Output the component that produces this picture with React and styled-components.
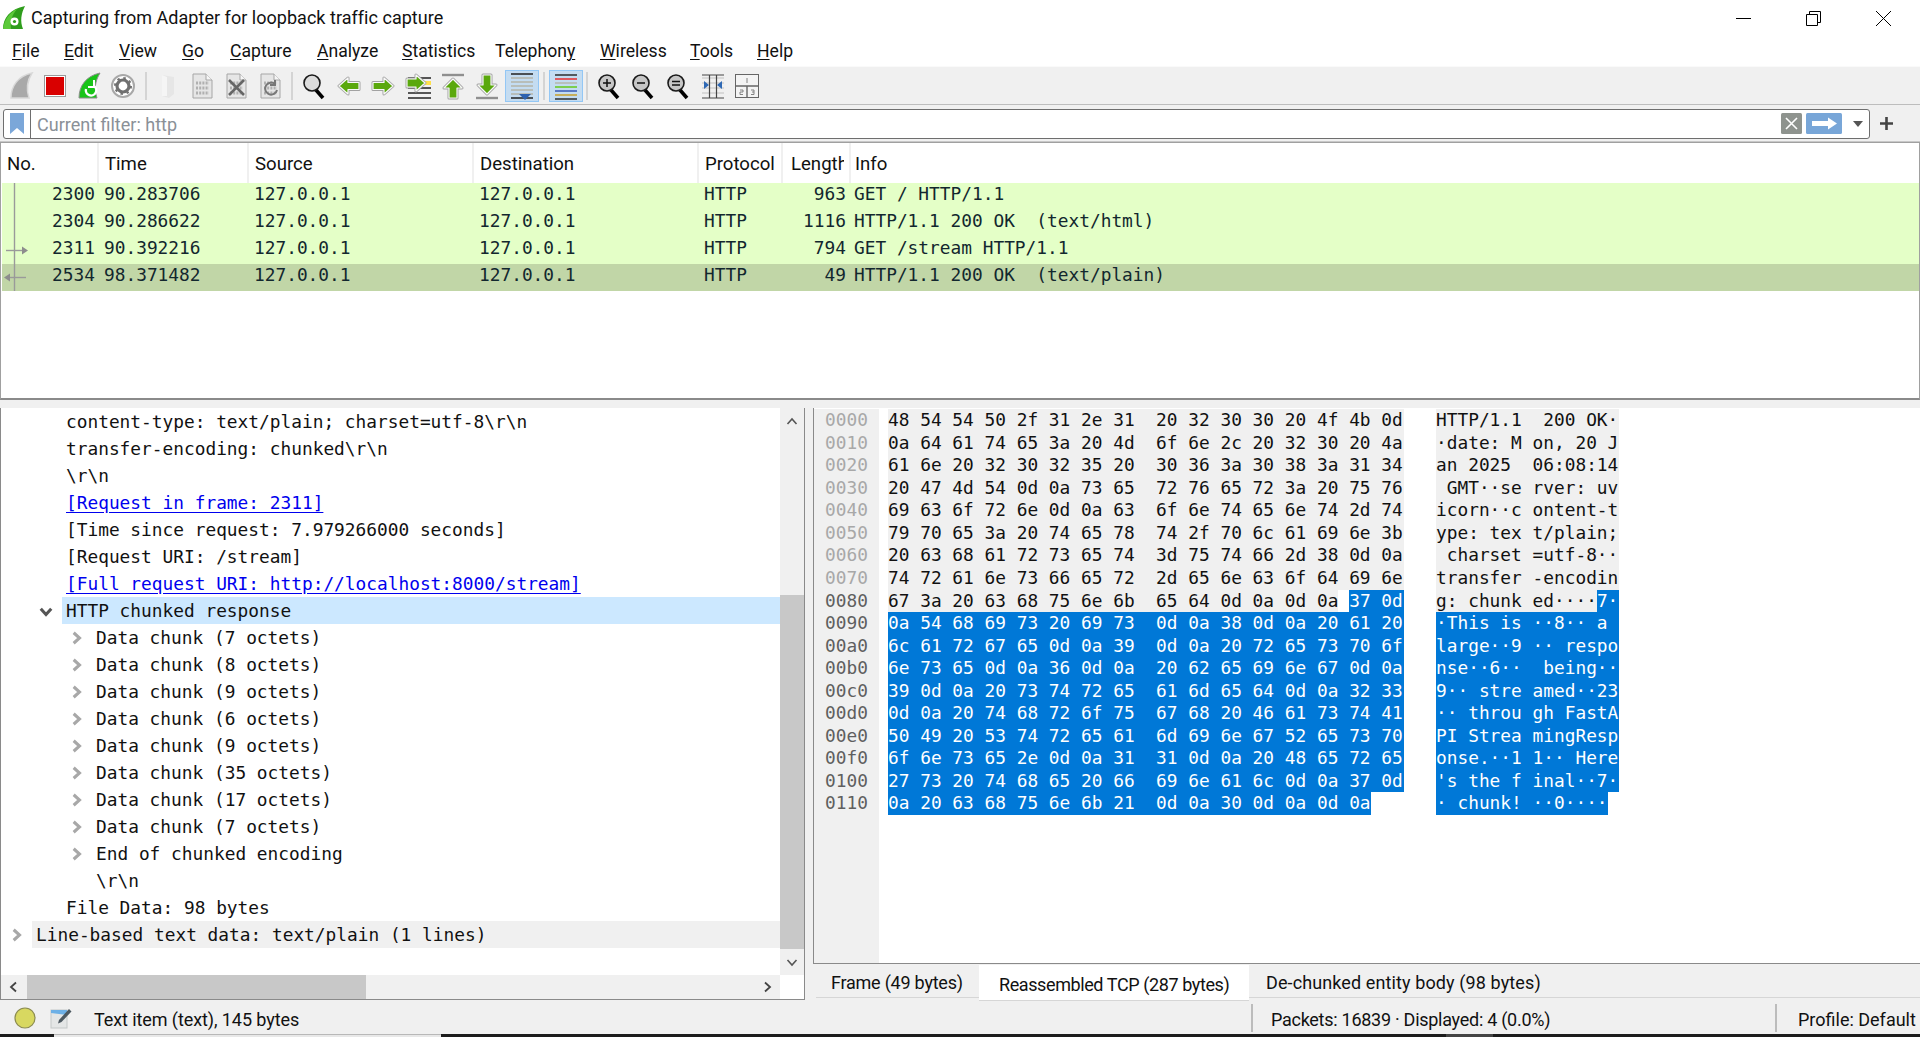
import React from "react";
import styled, { createGlobalStyle } from "styled-components";

const Global = createGlobalStyle`
  html, body { margin: 0; padding: 0; background: #fff; }
  body { font-family: Roboto, "Open Sans", sans-serif; color: #000; }
  * { box-sizing: border-box; }
`;

const UI = `Roboto, "Open Sans", "Liberation Sans", sans-serif`;
const MONO = `"DejaVu Sans Mono", "Liberation Mono", monospace`;

const Win = styled.div`
  width: 1920px; height: 1037px; overflow: hidden;
  display: flex; flex-direction: column; background: #f0f0f0;
  font-family: ${UI};
`;
const TitleBar = styled.header`
  height: 36px; background: #fff; display: flex; align-items: center;
  padding-left: 3px; position: relative;
`;
const TitleText = styled.div`
  font-size: 18px; margin: -2px 0 0 5px; color: #111; letter-spacing: 0.03px; white-space: nowrap;
`;
const WinButtons = styled.div`
  margin-left: auto; display: flex; align-items: center; padding-right: 29px; gap: 55px;
`;
const MenuBar = styled.nav`
  height: 30px; background: #fff; display: flex; align-items: center; padding: 0 0 1px 12px;
`;
const MenuItem = styled.span`
  font-size: 17.6px; color: #111; white-space: nowrap; flex: none; width: ${p => p.$w}px;
  u { text-underline-offset: 2px; text-decoration-thickness: 1px; }
`;
const Toolbar = styled.div`
  height: 39px; background: #f0f0f0; border-top: 1px solid #fafafa; border-bottom: 1px solid #bdbdbd;
  display: flex; align-items: center; padding: 1px 0 0 4px;
`;
const ToolBtn = styled.div`
  width: ${p => p.$w || 34}px; height: 32px; display: flex; align-items: center; justify-content: center; flex: none;
  background: ${p => (p.$on ? "#c4dcf1" : "transparent")};
  border: ${p => (p.$on ? "1px solid #93c7f5" : "none")};
`;
const ToolSep = styled.div`
  width: ${p => p.$w || 10}px; flex: none; display: flex; justify-content: center;
  &::before { content: ""; width: 2px; height: 28px; background: #d4d4d4; }
`;
const FilterBar = styled.div`
  height: 37px; background: #f0f0f0; border-bottom: 1px solid #c8c8c8; display: flex; align-items: center;
  padding: 1px 0 0 3px;
`;
const FilterBox = styled.div`
  width: 1867px; height: 30px; background: #fff; border: 1px solid #6e6e6e; border-radius: 3px;
  display: flex; align-items: center;
`;
const BookmarkCell = styled.div`
  width: 27px; height: 100%; border-right: 1px solid #6e6e6e; display: flex; align-items: center; justify-content: center;
`;
const FilterText = styled.div`
  font-size: 18px; color: #8a9097; padding: 2px 0 0 6px; flex: 1;
`;
const ApplyGap = styled.span`
  width: 4px; flex: none;
`;
const CaretCell = styled.div`
  width: 27px; flex: none; display: flex; justify-content: center; padding-left: 5px;
`;
const FilterPlus = styled.div`
  width: 32px; display: flex; justify-content: center;
`;
const PacketList = styled.section`
  height: 258px; background: #fff; border: 1px solid #a0a0a0; border-bottom: 2px solid #8a8a8a;
  display: flex; flex-direction: column; position: relative;
`;
const HeaderRow = styled.div`
  height: 40px; display: flex; background: #fff; flex: none;
`;
const HeaderCell = styled.div`
  width: ${p => p.$w}px; flex: ${p => (p.$w ? "none" : 1)}; font-size: 18.6px; padding-left: ${p => p.$pad ?? 6}px; padding-top: 1px;
  line-height: 40px; border-right: ${p => (p.$last ? "none" : "2px solid #f0f0f0")}; overflow: hidden; white-space: nowrap; color: #111;
`;
const HeaderLabel = styled.span`
  display: block; overflow: hidden; max-width: ${p => p.$clip || 400}px;
`;
const PacketRows = styled.div`
  position: relative; margin-left: 1px;
`;
const PacketRow = styled.div`
  height: 27px; display: flex; background: ${p => (p.$sel ? "#c1d6a7" : "#e4ffc7")};
  font-family: ${MONO}; font-size: 17.82px; line-height: 22px; color: #12272e; white-space: pre;
`;
const PacketCell = styled.div`
  width: ${p => p.$w}px; flex: ${p => (p.$w ? "none" : 1)}; text-align: ${p => p.$align || "left"};
  padding: 0 ${p => p.$pr ?? 0}px 0 ${p => p.$pl ?? 0}px;
`;
const RelationOverlay = styled.svg`
  position: absolute; left: 0; top: 0; pointer-events: none;
`;
const Gap = styled.div`
  height: 8px; flex: none; background: #f0f0f0;
`;
const Panes = styled.div`
  height: 592px; display: flex; flex: none;
`;
const TreePane = styled.section`
  width: 805px; flex: none; display: flex; flex-direction: column; background: #fff;
  border-left: 1px solid #8a8a8a; border-right: 1px solid #8a8a8a; border-bottom: 1px solid #8a8a8a;
`;
const TreeBody = styled.div`
  flex: 1; display: flex; min-height: 0;
`;
const TreeRows = styled.div`
  flex: 1; min-width: 0; font-family: ${MONO}; font-size: 17.82px; color: #111; overflow: hidden;
`;
const TreeRow = styled.div`
  height: 27px; display: flex; line-height: 27px; white-space: pre; padding-left: ${p => p.$level * 30 + 1}px;
`;
const ArrowBox = styled.div`
  width: 30px; flex: none; display: flex; align-items: center; justify-content: center; padding-right: 2px;
`;
const TreeLabel = styled.div`
  flex: 1; padding-left: 4px;
  background: ${p => (p.$tone === "sel" ? "#cce8ff" : p.$tone === "soft" ? "#f0f0f0" : "transparent")};
  color: ${p => (p.$link ? "#0000ee" : "inherit")};
  text-decoration: ${p => (p.$link ? "underline" : "none")};
  text-underline-offset: 3px;
`;
const VScroll = styled.div`
  width: 24px; flex: none; background: #f0f0f0; display: flex; flex-direction: column; align-items: stretch;
`;
const ScrollEnd = styled.div`
  height: ${p => p.$h}px; flex: none; display: flex; align-items: center; justify-content: center;
`;
const VThumb = styled.div`
  height: 354px; background: #c8c8c8; margin-top: 159px;
`;
const HScroll = styled.div`
  height: 24px; flex: none; background: #f0f0f0; display: flex; align-items: center; margin-right: 24px;
`;
const HEnd = styled.div`
  width: 26px; height: 100%; flex: none; display: flex; align-items: center; justify-content: center;
  margin-left: ${p => (p.$end ? "auto" : "0")};
`;
const HThumb = styled.div`
  width: 339px; height: 100%; background: #c8c8c8; flex: none;
`;
const Splitter = styled.div`
  width: 8px; flex: none; background: #f0f0f0;
`;
const ByteSide = styled.section`
  flex: 1; min-width: 0; display: flex; flex-direction: column;
`;
const HexPane = styled.div`
  height: 556px; flex: none; background: #fff; border-left: 1px solid #8a8a8a; border-bottom: 1px solid #8a8a8a;
  display: flex; font-family: ${MONO}; font-size: 17.82px; white-space: pre; padding-top: 1.2px; color: #111;
`;
const OffsetCol = styled.div`
  width: 65px; flex: none; background: #f0f0f0; padding-left: 11px; margin-right: 9px;
`;
const Offset = styled.div`
  height: 22.55px; line-height: 22.55px; color: ${p => (p.$dark ? "#5f5f5f" : "#a8a8a8")};
`;
const HexCol = styled.div`
  width: 516px; flex: none; margin-right: 32px;
`;
const AsciiCol = styled.div`
  width: 183px; flex: none;
`;
const ByteLine = styled.div`
  height: 22.55px; line-height: 22.55px; display: flex; width: 100%;
`;
const Plain = styled.span`
  background: #f0f0f0; flex: ${p => (p.$grow ? 1 : "none")};
`;
const Hollow = styled.span`
  background: #fff; flex: none;
`;
const Picked = styled.span`
  background: #0078d7; color: #fff; flex: ${p => (p.$grow ? 1 : "none")};
`;
const Tabs = styled.div`
  height: 36px; display: flex; flex: none; padding-left: 3px; align-items: flex-start; position: relative;
  &::after { content: ""; position: absolute; left: 3px; right: 0; top: 33px; height: 1px; background: #d6d6d6; }
`;
const Tab = styled.div`
  font-size: 18px; white-space: nowrap; color: #111; position: relative; z-index: 1;
  letter-spacing: ${p => p.$track}px;
  width: ${p => p.$w}px; flex: none; padding-left: ${p => p.$pad}px;
  height: ${p => (p.$on ? "36px" : "32px")}; margin-top: ${p => (p.$on ? "1px" : "0")};
  line-height: ${p => (p.$on ? "39px" : "38px")};
  background: ${p => (p.$on ? "#fff" : "transparent")};
  border-bottom: ${p => (p.$on ? "1px solid #d6d6d6" : "none")};
`;
const StatusBar = styled.footer`
  height: 34px; flex: none; background: #f0f0f0; display: flex; align-items: center; font-size: 18px; color: #111;
  padding-top: 2px;
`;
const StatusIcons = styled.div`
  width: 94px; flex: none; display: flex; align-items: center; padding-left: 14px; gap: 14px;
`;
const StatusField = styled.div`
  width: ${p => p.$w}px; flex: ${p => (p.$w ? "none" : 1)}; white-space: nowrap; padding-left: ${p => p.$pad || 0}px;
  height: 28px; line-height: 31px; letter-spacing: ${p => p.$track || 0}px;
  border-left: ${p => (p.$sep ? "2px solid #bcbcbc" : "none")};
`;
const Taskbar = styled.div`
  height: 3px; flex: none; display: flex; background: #1c1c1c;
`;
const TaskSegment = styled.div`
  width: ${p => p.$w}px; flex: none; background: ${p => p.$bg};
  border-top: ${p => (p.$line ? "1px solid #b8b8b8" : "none")};
`;

/* ---------- drawings ---------- */
const Svg = ({ w = 28, h = 30, children }) => (
  <svg width={w} height={h} viewBox={`0 0 ${w} ${h}`} fill="none">{children}</svg>
);
const OutlinedArrow = ({ d }) => (
  <>
    <path d={d} stroke="#a2a2a2" strokeWidth="3" strokeLinejoin="round" />
    <path d={d} stroke="#f8f8f8" strokeWidth="1.2" strokeLinejoin="round" fill="#5aa80c" />
  </>
);
const fin = "M4 27 C4 15 11 5 25 2 C20 10 19 18 22 27 Z";
const Fin = () => (
  <Svg><path d={fin} fill="#a9a9a9" stroke="#d8d8d8" strokeWidth="1.5" /></Svg>
);
const Stop = () => (
  <Svg>
    <rect x="3.5" y="4.5" width="21" height="21" fill="#fff" stroke="#9a9a9a" />
    <rect x="5" y="6" width="18" height="18" fill="#d90000" />
  </Svg>
);
const Restart = () => (
  <Svg>
    <path d={fin} fill="#18c418" stroke="#8c8c8c" strokeWidth="1" />
    <path d="M19 15 a5.2 5.2 0 1 1 -8 3" stroke="#fff" strokeWidth="2.4" />
    <path d="M19 9 v7 h-6" stroke="#fff" strokeWidth="2" />
  </Svg>
);
const Gear = () => (
  <Svg>
    <circle cx="14" cy="15" r="11" fill="#fff" stroke="#a8a8a8" strokeWidth="2" />
    <circle cx="14" cy="15" r="6" stroke="#707070" strokeWidth="3.2" />
    <circle cx="14" cy="15" r="8" stroke="#707070" strokeWidth="2" strokeDasharray="2.5 3.8" />
  </Svg>
);
const FadedOpen = () => (
  <Svg>
    <path d="M8 4 L20 6 V23 L15 27 L8 25 Z" fill="#e6e6e6" />
    <path d="M8 4 L13 6 V25 L8 25 Z" fill="#f5f5f5" />
  </Svg>
);
const Doc = ({ children }) => (
  <Svg>
    <path d="M5 3 H18 L24 9 V27 H5 Z" fill="#e6e6e6" stroke="#a6a6a6" />
    <path d="M18 3 V9 H24" fill="#f6f6f6" stroke="#a6a6a6" />
    <path d="M8 12 H21 M8 17 H21 M8 22 H21" stroke="#b0b0b0" strokeWidth="3" strokeDasharray="2 1.2" />
    {children}
  </Svg>
);
const Lens = ({ mark }) => (
  <Svg w={26} h={30}>
    <path d="M15 19 L22 27" stroke="#000" strokeWidth="3.6" />
    <circle cx="11" cy="12" r="8" fill={mark === "find" ? "#dcdcdc" : "#c6c6c6"} stroke="#1a1a1a" strokeWidth="1.6" />
    {mark === "plus" && <path d="M7 12 H15 M11 8 V16" stroke="#111" strokeWidth="1.5" />}
    {mark === "minus" && <path d="M7 12 H15" stroke="#111" strokeWidth="1.5" />}
    {mark === "equal" && <path d="M7 10.5 H15 M7 14 H15" stroke="#111" strokeWidth="1.5" />}
  </Svg>
);
const GreenArrow = ({ dir }) => (
  <Svg>
    <OutlinedArrow
      d={dir === "left"
        ? "M4 15 L13 7 V11.5 H24 V18.5 H13 V23 Z"
        : "M24 15 L15 7 V11.5 H4 V18.5 H15 V23 Z"}
    />
  </Svg>
);
const GoTo = () => (
  <Svg>
    <path d="M4 7 H27 M4 12 H27 M4 17 H27 M4 22 H27 M4 27 H27" stroke="#222" strokeWidth="1.4" />
    <path d="M21 10 H27 V14 H21 Z" fill="#ffe04a" />
    <OutlinedArrow d="M21 12 L12 4 V8 H3 V16 H12 V20 Z" />
  </Svg>
);
const EdgeArrow = ({ up }) => (
  <Svg>
    {up ? (
      <>
        <path d="M3 4 H25" stroke="#8f8f8f" strokeWidth="2.4" />
        <OutlinedArrow d="M14 8 L23 17 H18 V27 H10 V17 H5 Z" />
      </>
    ) : (
      <>
        <path d="M3 27 H25" stroke="#8f8f8f" strokeWidth="2.4" />
        <OutlinedArrow d="M14 23 L23 14 H18 V4 H10 V14 H5 Z" />
      </>
    )}
  </Svg>
);
const AutoScroll = () => (
  <Svg>
    <path d="M3 3 H25 M3 27 H25" stroke="#222" strokeWidth="1.4" />
    <path d="M3 7 H25 M3 11 H25 M3 15 H25 M3 19 H25 M3 23 H25" stroke="#b4b4a8" strokeWidth="1.4" />
    <path d="M11 23 H23 L17 29 Z" fill="#2c62b0" />
  </Svg>
);
const Colorize = () => (
  <Svg>
    <path d="M3 4 H25" stroke="#222" strokeWidth="1.4" />
    <path d="M3 8 H25" stroke="#e82020" strokeWidth="1.4" />
    <path d="M3 12 H25" stroke="#b4b4a8" strokeWidth="1.4" />
    <path d="M3 16 H25" stroke="#5ec80a" strokeWidth="1.4" />
    <path d="M3 20 H25" stroke="#2c4eb0" strokeWidth="1.4" />
    <path d="M3 24 H25" stroke="#c89a1a" strokeWidth="1.4" />
    <path d="M3 28 H25" stroke="#222" strokeWidth="1.4" />
  </Svg>
);
const ResizeCols = () => (
  <Svg>
    <path d="M3 7 H25 M3 12 H25 M3 17 H25 M3 22 H25" stroke="#c0c0c0" strokeWidth="1.2" />
    <path d="M3 4 H25 M3 27 H25" stroke="#444" strokeWidth="1.2" />
    <path d="M10.5 4 V27 M17.5 4 V27" stroke="#444" strokeWidth="1.2" />
    <path d="M5 10 L10 14 L5 18 Z M23 10 L18 14 L23 18 Z" fill="#2e68b4" />
  </Svg>
);
const PaneLayout = () => (
  <Svg>
    <rect x="2.5" y="3.5" width="23" height="23" fill="#f4f4f4" stroke="#666" />
    <path d="M2.5 15 H25.5 M14 15 V26.5" stroke="#666" strokeWidth="1.4" />
    <path d="M14 7 V12 M7 19 H10 V21 H7 V23.5 H10 M18 19 H21 V23.5 H18 M19 21 H21" stroke="#777" strokeWidth="0.9" />
  </Svg>
);
const Bookmark = () => (
  <svg width="14" height="21" viewBox="0 0 14 21"><path d="M0 0 H14 V21 L7 15 L0 21 Z" fill="#7ba7d9" /></svg>
);
const ClearBtn = () => (
  <svg width="21" height="21" viewBox="0 0 21 21">
    <rect width="21" height="21" rx="1.5" fill="#8e938e" />
    <path d="M5 5 L16 16 M16 5 L5 16" stroke="#fff" strokeWidth="1.6" />
  </svg>
);
const ApplyBtn = () => (
  <svg width="36" height="21" viewBox="0 0 36 21">
    <rect width="36" height="21" rx="1.5" fill="#78a6d8" />
    <path d="M6 8 H22 V4.5 L31 10.5 L22 16.5 V13 H6 Z" fill="#fff" />
  </svg>
);
const Caret = () => (
  <svg width="10" height="6" viewBox="0 0 10 6"><path d="M0 0 H10 L5 6 Z" fill="#555" /></svg>
);
const Plus = () => (
  <svg width="13" height="13" viewBox="0 0 13 13"><path d="M6.5 0 V13 M0 6.5 H13" stroke="#444" strokeWidth="2.6" /></svg>
);
const Chevron = ({ dir = "right", color = "#a8a8a8", size = 12, weight = 2.6 }) => {
  const paths = {
    right: "M4 1.5 L9 6 L4 10.5",
    left: "M8 1.5 L3 6 L8 10.5",
    up: "M1.5 8 L6 3 L10.5 8",
    down: "M1.5 4 L6 9 L10.5 4",
  };
  return (
    <svg width={size} height={size} viewBox="0 0 12 12" fill="none">
      <path d={paths[dir]} stroke={color} strokeWidth={weight} />
    </svg>
  );
};
const AppFin = () => (
  <svg width="23" height="24" viewBox="0 0 23 24">
    <path d="M0 23 C0 12 7 3 22 0 C18 8 17 15 20 23 Z" fill="#2f9d1c" />
    <path d="M0 23 C1 14 7 6 14 3 C9 9 7 15 8 23 Z" fill="#5cc93a" />
    <circle cx="11.5" cy="15.5" r="4" fill="#fff" />
    <circle cx="11.5" cy="15.5" r="1.6" fill="#2f9d1c" />
  </svg>
);
const WinMin = () => <svg width="15" height="15" viewBox="0 0 15 15"><path d="M0 7.5 H15" stroke="#000" /></svg>;
const WinRestore = () => (
  <svg width="15" height="15" viewBox="0 0 15 15" fill="none">
    <path d="M0.5 3.5 H11.5 V14.5 H0.5 Z M3.5 3.5 V0.5 H14.5 V11.5 H11.5" stroke="#000" />
  </svg>
);
const WinClose = () => <svg width="15" height="15" viewBox="0 0 15 15"><path d="M0 0 L15 15 M15 0 L0 15" stroke="#000" /></svg>;
const StatusDot = () => (
  <svg width="22" height="22" viewBox="0 0 22 22"><circle cx="11" cy="11" r="10" fill="#d8d860" stroke="#8c8c50" strokeWidth="1.2" /></svg>
);
const EditNote = () => (
  <svg width="22" height="22" viewBox="0 0 22 22" fill="none">
    <rect x="1" y="3" width="16" height="18" fill="#e4e6e6" stroke="#c4c8c8" />
    <path d="M1 3 H17 V8 L1 6 Z" fill="#6db0e6" />
    <path d="M9 13 L19 2 L21.5 4.5 L11.5 15 L8 16.5 Z" fill="#4c5860" />
  </svg>
);

/* ---------- data ---------- */
const menu = [
  ["", "F", "ile", 52], ["", "E", "dit", 55], ["", "V", "iew", 63], ["", "G", "o", 48], ["", "C", "apture", 87],
  ["", "A", "nalyze", 85], ["", "S", "tatistics", 93], ["Telephon", "y", "", 105], ["", "W", "ireless", 90],
  ["", "T", "ools", 67], ["", "H", "elp", 40],
];
const cols = [98, 150, 225, 225, 84, 68, 0];
const headers = ["No.", "Time", "Source", "Destination", "Protocol", "Length", "Info"];
const packets = [
  ["2300", "90.283706", "963", "GET / HTTP/1.1"],
  ["2304", "90.286622", "1116", "HTTP/1.1 200 OK  (text/html)"],
  ["2311", "90.392216", "794", "GET /stream HTTP/1.1"],
  ["2534", "98.371482", "49", "HTTP/1.1 200 OK  (text/plain)"],
];
const tree = [
  { l: 1, t: "content-type: text/plain; charset=utf-8\\r\\n" },
  { l: 1, t: "transfer-encoding: chunked\\r\\n" },
  { l: 1, t: "\\r\\n" },
  { l: 1, t: "[Request in frame: 2311]", link: true },
  { l: 1, t: "[Time since request: 7.979266000 seconds]" },
  { l: 1, t: "[Request URI: /stream]" },
  { l: 1, t: "[Full request URI: http://localhost:8000/stream]", link: true },
  { l: 1, t: "HTTP chunked response", open: true, tone: "sel" },
  { l: 2, t: "Data chunk (7 octets)", more: true },
  { l: 2, t: "Data chunk (8 octets)", more: true },
  { l: 2, t: "Data chunk (9 octets)", more: true },
  { l: 2, t: "Data chunk (6 octets)", more: true },
  { l: 2, t: "Data chunk (9 octets)", more: true },
  { l: 2, t: "Data chunk (35 octets)", more: true },
  { l: 2, t: "Data chunk (17 octets)", more: true },
  { l: 2, t: "Data chunk (7 octets)", more: true },
  { l: 2, t: "End of chunked encoding", more: true },
  { l: 2, t: "\\r\\n" },
  { l: 1, t: "File Data: 98 bytes" },
  { l: 0, t: "Line-based text data: text/plain (1 lines)", more: true, tone: "soft" },
];
const hex = `48 54 54 50 2f 31 2e 31 20 32 30 30 20 4f 4b 0d
0a 64 61 74 65 3a 20 4d 6f 6e 2c 20 32 30 20 4a
61 6e 20 32 30 32 35 20 30 36 3a 30 38 3a 31 34
20 47 4d 54 0d 0a 73 65 72 76 65 72 3a 20 75 76
69 63 6f 72 6e 0d 0a 63 6f 6e 74 65 6e 74 2d 74
79 70 65 3a 20 74 65 78 74 2f 70 6c 61 69 6e 3b
20 63 68 61 72 73 65 74 3d 75 74 66 2d 38 0d 0a
74 72 61 6e 73 66 65 72 2d 65 6e 63 6f 64 69 6e
67 3a 20 63 68 75 6e 6b 65 64 0d 0a 0d 0a 37 0d
0a 54 68 69 73 20 69 73 0d 0a 38 0d 0a 20 61 20
6c 61 72 67 65 0d 0a 39 0d 0a 20 72 65 73 70 6f
6e 73 65 0d 0a 36 0d 0a 20 62 65 69 6e 67 0d 0a
39 0d 0a 20 73 74 72 65 61 6d 65 64 0d 0a 32 33
0d 0a 20 74 68 72 6f 75 67 68 20 46 61 73 74 41
50 49 20 53 74 72 65 61 6d 69 6e 67 52 65 73 70
6f 6e 73 65 2e 0d 0a 31 31 0d 0a 20 48 65 72 65
27 73 20 74 68 65 20 66 69 6e 61 6c 0d 0a 37 0d
0a 20 63 68 75 6e 6b 21 0d 0a 30 0d 0a 0d 0a`.split("\n").map(l => l.split(" "));
const SEL_START = 0x8e;

const hexText = (bytes, from) =>
  bytes.map((b, i) => b + (i === bytes.length - 1 ? "" : from + i === 7 ? "  " : " ")).join("");
const toChar = b => {
  const c = parseInt(b, 16);
  return c >= 32 && c < 127 ? String.fromCharCode(c) : "\u00b7";
};
const asciiText = (bytes, from) =>
  bytes.map((b, i) => toChar(b) + (from + i === 7 && i !== bytes.length - 1 ? " " : "")).join("");

const HexLine = ({ bytes, index }) => {
  const base = index * 16;
  if (base + 16 <= SEL_START) return <ByteLine><Plain $grow>{hexText(bytes, 0)}</Plain></ByteLine>;
  if (base >= SEL_START) {
    return <ByteLine><Picked $grow={bytes.length === 16}>{hexText(bytes, 0)}</Picked></ByteLine>;
  }
  const n = SEL_START - base;
  return (
    <ByteLine>
      <Plain>{hexText(bytes.slice(0, n), 0)}</Plain>
      <Hollow> </Hollow>
      <Picked $grow>{hexText(bytes.slice(n), n)}</Picked>
    </ByteLine>
  );
};
const AsciiLine = ({ bytes, index }) => {
  const base = index * 16;
  if (base + 16 <= SEL_START) return <ByteLine><Plain $grow>{asciiText(bytes, 0)}</Plain></ByteLine>;
  if (base >= SEL_START) {
    return <ByteLine><Picked $grow={bytes.length === 16}>{asciiText(bytes, 0)}</Picked></ByteLine>;
  }
  const n = SEL_START - base;
  return (
    <ByteLine>
      <Plain>{asciiText(bytes.slice(0, n), 0)}</Plain>
      <Picked $grow>{asciiText(bytes.slice(n), n)}</Picked>
    </ByteLine>
  );
};

export default function App() {
  return (
    <Win>
      <Global />
      <TitleBar>
        <AppFin />
        <TitleText>Capturing from Adapter for loopback traffic capture</TitleText>
        <WinButtons>
          <WinMin />
          <WinRestore />
          <WinClose />
        </WinButtons>
      </TitleBar>
      <MenuBar>
        {menu.map(([a, u, b, w]) => (
          <MenuItem key={a + u + b} $w={w}>{a}<u>{u}</u>{b}</MenuItem>
        ))}
      </MenuBar>
      <Toolbar>
        <ToolBtn><Fin /></ToolBtn>
        <ToolBtn><Stop /></ToolBtn>
        <ToolBtn><Restart /></ToolBtn>
        <ToolBtn><Gear /></ToolBtn>
        <ToolSep $w={11} />
        <ToolBtn><FadedOpen /></ToolBtn>
        <ToolBtn><Doc /></ToolBtn>
        <ToolBtn><Doc><path d="M7 9 L22 24 M22 9 L7 24" stroke="#666" strokeWidth="2.6" /></Doc></ToolBtn>
        <ToolBtn><Doc><path d="M19 13 a6 6 0 1 0 2 6 M19 9 v5 h-5" stroke="#777" strokeWidth="2" /></Doc></ToolBtn>
        <ToolSep $w={10} />
        <ToolBtn $w={34.6}><Lens mark="find" /></ToolBtn>
        <ToolBtn $w={34.6}><GreenArrow dir="left" /></ToolBtn>
        <ToolBtn $w={34.6}><GreenArrow dir="right" /></ToolBtn>
        <ToolBtn $w={34.6}><GoTo /></ToolBtn>
        <ToolBtn $w={34.6}><EdgeArrow up /></ToolBtn>
        <ToolBtn $w={34.6}><EdgeArrow /></ToolBtn>
        <ToolBtn $on><AutoScroll /></ToolBtn>
        <ToolSep $w={10} />
        <ToolBtn $on><Colorize /></ToolBtn>
        <ToolSep $w={9} />
        <ToolBtn $w={34.6}><Lens mark="plus" /></ToolBtn>
        <ToolBtn $w={34.6}><Lens mark="minus" /></ToolBtn>
        <ToolBtn $w={34.6}><Lens mark="equal" /></ToolBtn>
        <ToolBtn $w={34.6}><ResizeCols /></ToolBtn>
        <ToolBtn $w={34.6}><PaneLayout /></ToolBtn>
      </Toolbar>
      <FilterBar>
        <FilterBox>
          <BookmarkCell><Bookmark /></BookmarkCell>
          <FilterText>Current filter: http</FilterText>
          <ClearBtn />
          <ApplyGap />
          <ApplyBtn />
          <CaretCell><Caret /></CaretCell>
        </FilterBox>
        <FilterPlus><Plus /></FilterPlus>
      </FilterBar>
      <PacketList>
        <HeaderRow>
          {headers.map((h, i) => (
            <HeaderCell key={h} $w={cols[i]} $last={i === 6} $pad={i === 0 ? 6 : i === 5 ? 8 : i === 6 ? 4 : 6}>
              <HeaderLabel $clip={i === 5 ? 53 : undefined}>{h}</HeaderLabel>
            </HeaderCell>
          ))}
        </HeaderRow>
        <PacketRows>
          {packets.map((p, i) => (
            <PacketRow key={p[0]} $sel={i === 3}>
              <PacketCell $w={cols[0] - 1} $align="right" $pr={4}>{p[0]}</PacketCell>
              <PacketCell $w={cols[1]} $pl={5}>{p[1]}</PacketCell>
              <PacketCell $w={cols[2]} $pl={5}>127.0.0.1</PacketCell>
              <PacketCell $w={cols[3]} $pl={5}>127.0.0.1</PacketCell>
              <PacketCell $w={cols[4]} $pl={5}>HTTP</PacketCell>
              <PacketCell $w={cols[5]} $align="right" $pr={5}>{p[2]}</PacketCell>
              <PacketCell $pl={3}>{p[3]}</PacketCell>
            </PacketRow>
          ))}
          <RelationOverlay width="30" height="108" viewBox="0 0 30 108" fill="none">
            <path d="M12.5 0 V108" stroke="#9a9a9a" strokeWidth="1.4" />
            <path d="M4 67.5 H22" stroke="#9a9a9a" strokeWidth="1.4" />
            <path d="M20 63.5 L26 67.5 L20 71.5 Z" fill="#8d8d8d" />
            <path d="M6 94.5 H24" stroke="#9a9a9a" strokeWidth="1.4" />
            <path d="M8 90.5 L2 94.5 L8 98.5 Z" fill="#8d8d8d" />
          </RelationOverlay>
        </PacketRows>
      </PacketList>
      <Gap />
      <Panes>
        <TreePane>
          <TreeBody>
            <TreeRows>
              {tree.map((r, i) => (
                <TreeRow key={i} $level={r.l}>
                  <ArrowBox>
                    {r.more && <Chevron dir="right" size={14} />}
                    {r.open && <Chevron dir="down" color="#555" size={14} />}
                  </ArrowBox>
                  <TreeLabel $tone={r.tone} $link={r.link}>{r.t}</TreeLabel>
                </TreeRow>
              ))}
            </TreeRows>
            <VScroll>
              <ScrollEnd $h={28}><Chevron dir="up" color="#555" size={12} weight={1.6} /></ScrollEnd>
              <VThumb />
              <ScrollEnd $h={26}><Chevron dir="down" color="#555" size={12} weight={1.6} /></ScrollEnd>
            </VScroll>
          </TreeBody>
          <HScroll>
            <HEnd><Chevron dir="left" color="#444" size={12} weight={1.8} /></HEnd>
            <HThumb />
            <HEnd $end><Chevron dir="right" color="#444" size={12} weight={1.8} /></HEnd>
          </HScroll>
        </TreePane>
        <Splitter />
        <ByteSide>
          <HexPane>
            <OffsetCol>
              {hex.map((_, i) => (
                <Offset key={i} $dark={i >= 8}>{(i * 16).toString(16).padStart(4, "0")}</Offset>
              ))}
            </OffsetCol>
            <HexCol>
              {hex.map((b, i) => <HexLine key={i} bytes={b} index={i} />)}
            </HexCol>
            <AsciiCol>
              {hex.map((b, i) => <AsciiLine key={i} bytes={b} index={i} />)}
            </AsciiCol>
          </HexPane>
          <Tabs>
            <Tab $w={163} $pad={15} $track={-0.23}>Frame (49 bytes)</Tab>
            <Tab $w={270} $pad={20} $track={-0.4} $on>Reassembled TCP (287 bytes)</Tab>
            <Tab $w={300} $pad={17} $track={0.11}>De-chunked entity body (98 bytes)</Tab>
          </Tabs>
        </ByteSide>
      </Panes>
      <StatusBar>
        <StatusIcons>
          <StatusDot />
          <EditNote />
        </StatusIcons>
        <StatusField $w={1157} $track={-0.09}>Text item (text), 145 bytes</StatusField>
        <StatusField $w={524} $sep $pad={18} $track={-0.27}>Packets: 16839 · Displayed: 4 (0.0%)</StatusField>
        <StatusField $sep $pad={21}>Profile: Default</StatusField>
      </StatusBar>
      <Taskbar>
        <TaskSegment $w={54} $bg="#1c1c1c" />
        <TaskSegment $w={387} $bg="#e8e8e8" $line />
        <TaskSegment $w={1005} $bg="#1c1c1c" />
        <TaskSegment $w={47} $bg="#444" />
      </Taskbar>
    </Win>
  );
}
